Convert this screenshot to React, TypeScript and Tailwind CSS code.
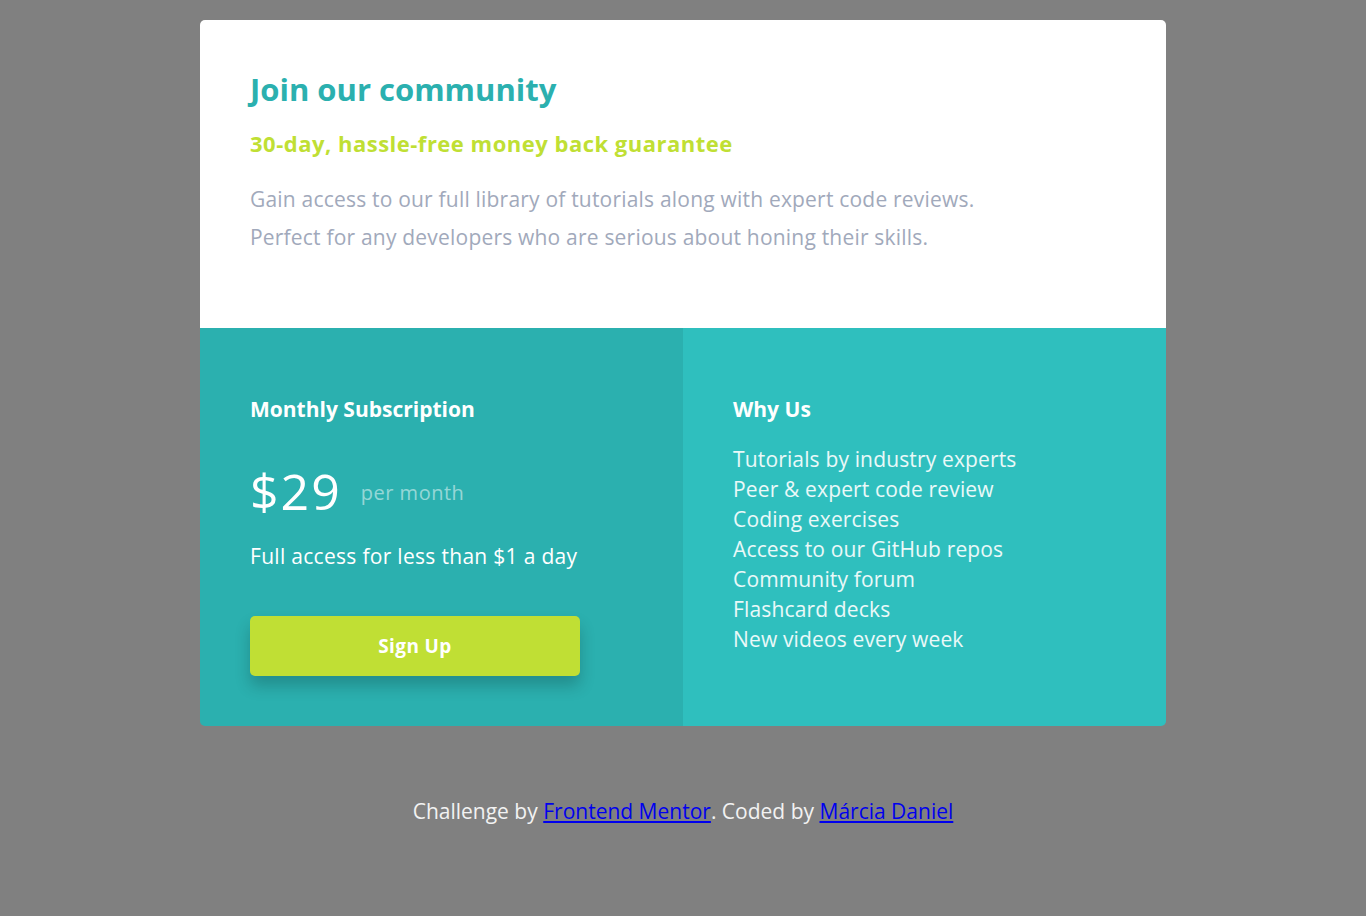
import React from 'react';

const perks = [
  'Tutorials by industry experts',
  'Peer & expert code review',
  'Coding exercises',
  'Access to our GitHub repos',
  'Community forum',
  'Flashcard decks',
  'New videos every week',
];

const App: React.FC = () => {
  return (
    <div className="min-h-[916px] w-full bg-[#808080] pt-5 font-['Open_Sans',sans-serif]">
      <main className="mx-auto w-[966px] rounded-[5px] overflow-hidden">
        <section className="bg-white h-[308px] px-[50px] pt-[49px]">
          <h1 className="text-[31px] leading-[40px] font-bold text-[#2bb0af]">Join our community</h1>
          <h2 className="mt-[19px] text-[22px] leading-[30px] font-bold tracking-[0.5px] text-[#c0df34]">
            30-day, hassle-free money back guarantee
          </h2>
          <p className="mt-[22px] text-[21px] leading-[38px] tracking-[0.2px] text-[#a1a9bb]">
            Gain access to our full library of tutorials along with expert code reviews.
            <br />
            Perfect for any developers who are serious about honing their skills.
          </p>
        </section>
        <div className="grid grid-cols-2 h-[398px]">
          <section className="bg-[#2bb0af] px-[50px] pt-[66px] text-white">
            <h3 className="text-[21px] leading-[30px] font-bold">Monthly Subscription</h3>
            <div className="mt-[39px] flex items-center h-[56px]">
              <span className="text-[50px] leading-[56px] tracking-[2px]">$29</span>
              <span className="ml-[19px] mt-1 text-[20px] tracking-[0.5px] text-white/50">per month</span>
            </div>
            <p className="mt-[23px] text-[21px] leading-[28px] tracking-[0.3px]">Full access for less than $1 a day</p>
            <button className="mt-[46px] w-[330px] h-[60px] rounded-[5px] bg-[#c0df34] text-[19px] font-bold tracking-[0.4px] text-white shadow-[0_10px_16px_rgba(0,0,0,0.2)]">
              Sign Up
            </button>
          </section>
          <section className="bg-[#2fbfbe] px-[50px] pt-[66px] text-white">
            <h3 className="text-[21px] leading-[30px] font-bold">Why Us</h3>
            <ul className="mt-5">
              {perks.map((p) => (
                <li key={p} className="text-[21px] leading-[30px] tracking-[0.15px] text-white/90">{p}</li>
              ))}
            </ul>
          </section>
        </div>
      </main>
      <footer className="mt-[70px] text-center text-[21px] leading-[30px] text-[#f2f2f2]">
        Challenge by{' '}
        <a href="#" className="text-[#0000ee] underline">Frontend Mentor</a>. Coded by{' '}
        <a href="#" className="text-[#0000ee] underline">Márcia Daniel</a>
      </footer>
    </div>
  );
};

export default App;
